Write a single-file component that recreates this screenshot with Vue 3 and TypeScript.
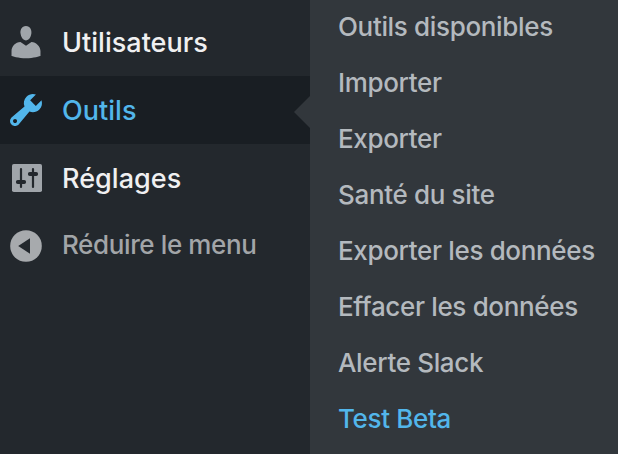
<script setup lang="ts">
interface MenuEntry {
  key: string
  label: string
}

const menu: MenuEntry[] = [
  { key: 'users', label: 'Utilisateurs' },
  { key: 'tools', label: 'Outils' },
  { key: 'settings', label: 'Réglages' },
  { key: 'collapse', label: 'Réduire le menu' },
]

const submenu: MenuEntry[] = [
  { key: 'available', label: 'Outils disponibles' },
  { key: 'import', label: 'Importer' },
  { key: 'export', label: 'Exporter' },
  { key: 'health', label: 'Santé du site' },
  { key: 'export-data', label: 'Exporter les données' },
  { key: 'erase-data', label: 'Effacer les données' },
  { key: 'slack', label: 'Alerte Slack' },
  { key: 'beta', label: 'Test Beta' },
]
</script>

<template>
  <div class="admin">
    <nav class="menu">
      <a v-for="item in menu" :key="item.key" class="item" :class="item.key">
        <svg class="icon" viewBox="0 0 20 20" aria-hidden="true">
          <path
            v-if="item.key === 'users'"
            d="M10 9.25c-2.27 0-2.73-3.44-2.73-3.44C7 4.02 7.82 2 9.97 2c2.16 0 2.98 2.02 2.71 3.81 0 0-.41 3.44-2.68 3.44zm0 2.57L12.72 10c2.39 0 4.52 2.33 4.52 4.53v2.49s-3.65 1.13-7.24 1.13c-3.65 0-7.24-1.13-7.24-1.13v-2.49c0-2.25 1.94-4.48 4.47-4.48z"
          />
          <path
            v-else-if="item.key === 'tools'"
            d="M16.68 9.77c-1.34 1.34-3.3 1.67-4.95.99l-5.41 6.52c-.99.99-2.59.99-3.58 0s-.99-2.59 0-3.57l6.52-5.42c-.68-1.65-.35-3.61.99-4.95 1.28-1.28 3.12-1.62 4.72-1.06l-2.89 2.89 2.82 2.82 2.86-2.87c.53 1.58.18 3.39-1.08 4.65zM3.81 16.21c.4.39 1.04.39 1.43 0 .4-.4.4-1.04 0-1.43-.39-.4-1.03-.4-1.43 0-.39.39-.39 1.03 0 1.43z"
          />
          <template v-else-if="item.key === 'settings'">
            <rect x="3" y="3" width="15" height="14" rx="0.9" />
            <path class="slider" d="M7.5 5.5v9M13.5 5.5v9" />
            <path class="knob" d="M5.9 12h3.2M11.9 8h3.2" />
          </template>
          <template v-else>
            <circle cx="10" cy="10" r="7.9" />
            <path class="arrow" d="M12 6.1v7.8L6.1 10z" />
          </template>
        </svg>
        <span class="label">{{ item.label }}</span>
      </a>
    </nav>
    <nav class="submenu">
      <a v-for="item in submenu" :key="item.key" class="sub" :class="item.key">{{ item.label }}</a>
    </nav>
  </div>
</template>

<style>
body {
  margin: 0;
  background: #23282d;
}
</style>

<style scoped>
.admin {
  display: flex;
  width: 618px;
  height: 454px;
  overflow: hidden;
  font-family: Inter, "Liberation Sans", sans-serif;
  background: #23282d;
}
.menu {
  width: 310px;
  padding-top: 8px;
  flex: none;
}
.item {
  position: relative;
  display: flex;
  align-items: center;
  height: 68px;
  padding-left: 6px;
  box-sizing: border-box;
  color: #f0f0f1;
  font-size: 27px;
  font-weight: 500;
  letter-spacing: 0.03px;
}
.icon {
  width: 40px;
  height: 40px;
  margin-right: 16px;
  flex: none;
  fill: #a0a5aa;
}
.label {
  white-space: nowrap;
}
.tools {
  background: #191e23;
  color: #52b6eb;
}
.tools .icon {
  fill: #52b6eb;
}
.tools::after {
  content: "";
  position: absolute;
  right: 0;
  top: 20px;
  border: 16px solid transparent;
  border-left-width: 0;
  border-right-color: #32373c;
}
.collapse {
  color: #a2a5a8;
  font-size: 26px;
  letter-spacing: -0.38px;
}
.collapse .icon {
  fill: #a7aaad;
}
.collapse .label {
  padding-bottom: 3px;
}
.slider,
.knob {
  fill: none;
  stroke: #23282d;
  stroke-linecap: round;
}
.slider {
  stroke-width: 1.1;
}
.knob {
  stroke-width: 1.9;
}
.arrow {
  fill: #23282d;
}
.submenu {
  display: flex;
  flex-direction: column;
  flex: 1;
  padding-left: 28px;
  background: #32373c;
}
.sub {
  flex: none;
  height: 56px;
  line-height: 54px;
  color: #b4b9be;
  font-size: 26px;
  font-weight: 500;
  letter-spacing: -0.34px;
  white-space: nowrap;
}
.beta {
  color: #52b6eb;
}
</style>
